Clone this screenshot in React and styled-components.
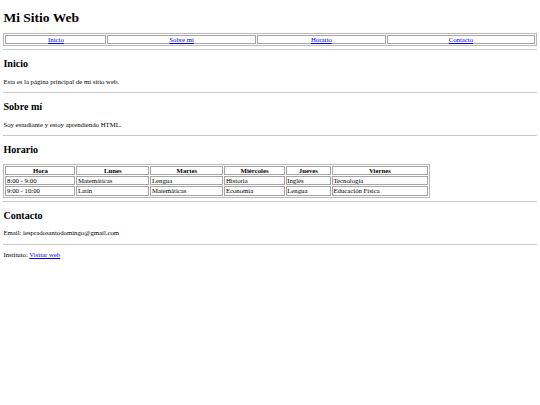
import React from 'react';
import styled, { createGlobalStyle } from 'styled-components';

const GlobalStyle = createGlobalStyle`
    body {
        margin: 3.4px;
        background: #fff;
        color: #000;
        font-family: "Liberation Serif", "Times New Roman", serif;
        font-size: 6.75px;
    }
`;

const Title = styled.h1`
    font-size: 13.5px;
    line-height: 1.15;
    margin: 7px 0 7px;
    font-weight: bold;
`;

const Section = styled.section``;

const Heading = styled.h2`
    font-size: 10.1px;
    line-height: 1.15;
    margin: 8px 0;
    font-weight: bold;
`;

const Text = styled.p`
    margin: 6.5px 0;
    font-size: 6.75px;
    line-height: 1.15;
`;

const Rule = styled.hr`
    margin: 3px 0;
    height: 0;
    border: none;
    border-top: 1px solid #c8c8c8;
`;

const Table = styled.table`
    width: ${(p) => p.$width || '100%'};
    border: 1px solid #b8b8b8;
    border-spacing: 1px;
    font-size: 6.75px;
`;

const Cell = styled.td`
    border: 1px solid #a4a4a4;
    padding: 0 0.5px;
    line-height: 1.1;
    text-align: ${(p) => (p.$center ? 'center' : 'left')};
`;

const HeadCell = styled.th`
    border: 1px solid #a4a4a4;
    padding: 0 0.5px;
    line-height: 1.1;
    text-align: center;
    font-weight: bold;
`;

const Link = styled.a`
    color: #0000ee;
    text-decoration: underline;
`;

const menu = ['Inicio', 'Sobre mí', 'Horario', 'Contacto'];

const days = ['Hora', 'Lunes', 'Martes', 'Miércoles', 'Jueves', 'Viernes'];

const schedule = [
    ['8:00 - 9:00', 'Matemáticas', 'Lengua', 'Historia', 'Inglés', 'Tecnología'],
    ['9:00 - 10:00', 'Latín', 'Matemáticas', 'Economía', 'Lengua', 'Educación Física'],
];

export default function App() {
    return (
        <>
            <GlobalStyle />
            <header>
                <Title>Mi Sitio Web</Title>
                <nav>
                    <Table>
                        <tbody>
                            <tr>
                                {menu.map((item) => (
                                    <Cell key={item} $center>
                                        <Link href="#">{item}</Link>
                                    </Cell>
                                ))}
                            </tr>
                        </tbody>
                    </Table>
                </nav>
            </header>
            <Rule />
            <Section>
                <Heading>Inicio</Heading>
                <Text>Esta es la página principal de mi sitio web.</Text>
            </Section>
            <Rule />
            <Section>
                <Heading>Sobre mí</Heading>
                <Text>Soy estudiante y estoy aprendiendo HTML.</Text>
            </Section>
            <Rule />
            <Section>
                <Heading>Horario</Heading>
                <Table $width="80%">
                    <thead>
                        <tr>
                            {days.map((d) => (
                                <HeadCell key={d}>{d}</HeadCell>
                            ))}
                        </tr>
                    </thead>
                    <tbody>
                        {schedule.map((row) => (
                            <tr key={row[0]}>
                                {row.map((v, i) => (
                                    <Cell key={i}>{v}</Cell>
                                ))}
                            </tr>
                        ))}
                    </tbody>
                </Table>
            </Section>
            <Rule />
            <Section>
                <Heading>Contacto</Heading>
                <Text>Email: iespradosantodomingo@gmail.com</Text>
            </Section>
            <Rule />
            <footer>
                <Text>
                    Instituto: <Link href="#">Visitar web</Link>
                </Text>
            </footer>
        </>
    );
}
